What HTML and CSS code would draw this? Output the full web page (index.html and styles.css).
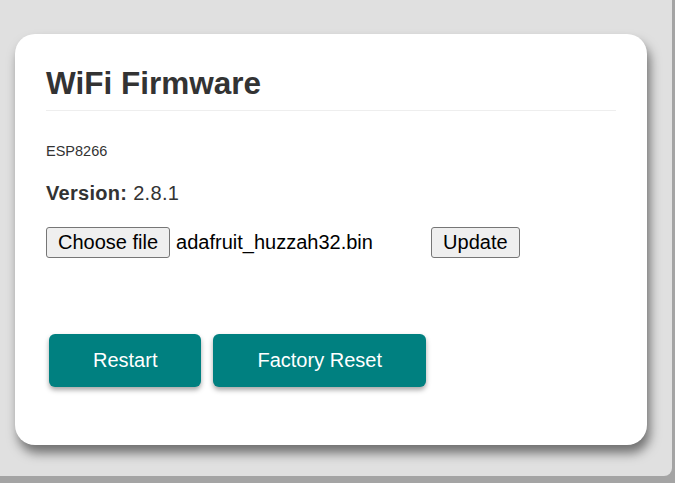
FILE: index.html
```html
<!DOCTYPE html>
<html lang="en">
  <head>
    <meta charset="UTF-8" />
    <meta name="viewport" content="width=device-width, initial-scale=1.0" />
    <title>WiFi Firmware</title>
    <link rel="stylesheet" href="styles.css">
  </head>
  <body>
    <div class="page">
      <div class="card">
        <h1 class="title">WiFi Firmware</h1>
        <p class="chip">ESP8266</p>
        <p class="version"><b>Version:</b> 2.8.1</p>
        <!-- fake file input so the chosen file name shows up -->
        <div class="upload-row">
          <button class="native-btn">Choose file</button>
          <span class="file-name">adafruit_huzzah32.bin</span>
          <button class="native-btn">Update</button>
        </div>
        <div class="actions">
          <button class="action-btn">Restart</button>
          <button class="action-btn">Factory Reset</button>
        </div>
      </div>
    </div>
  </body>
</html>
```

FILE: styles.css
```css
* {
  box-sizing: border-box;
}
html {
  background-color: #a4a4a4;
}
body {
  margin: 0;
  font-family: "Liberation Sans", Arial, sans-serif;
  color: #333;
}
.page {
  width: 672px;
  height: 476px;
  background-color: #e0e0e0;
  border-bottom-right-radius: 8px;
  padding: 34px 0 0 15px;
}
.card {
  width: 632px;
  height: 411px;
  background-color: white;
  border-radius: 20px;
  padding: 31px;
  box-shadow: 3px 8px 11px rgba(0, 0, 0, 0.5);
}
.title {
  margin: 0;
  font-size: 31.5px;
  padding-bottom: 8px;
  border-bottom: 1px solid #eee;
}
.chip {
  margin: 32px 0 0;
  font-size: 14.5px;
}
.version {
  margin: 23px 0 0;
  font-size: 20px;
  letter-spacing: 0.3px;
}
.upload-row {
  display: flex;
  align-items: baseline;
  margin-top: 22px;
  font-size: 20px;
}
.native-btn {
  font-family: "Liberation Sans", Arial, sans-serif;
  font-size: 20px;
  color: black;
  background-color: #efefef;
  border: 1px solid #767676;
  border-radius: 3px;
  padding: 3px 11px;
}
.file-name {
  width: 261px;
  padding-left: 6px;
  color: black;
}
.actions {
  display: flex;
  gap: 12px;
  margin: 76px 0 0 3px;
}
.action-btn {
  height: 53px;
  padding: 0 44px;
  font-family: "Liberation Sans", Arial, sans-serif;
  font-size: 20px;
  color: white;
  background-color: teal;
  border: none;
  border-radius: 6px;
  box-shadow: 0 3px 5px rgba(0, 0, 0, 0.35);
  cursor: pointer;
}
```
